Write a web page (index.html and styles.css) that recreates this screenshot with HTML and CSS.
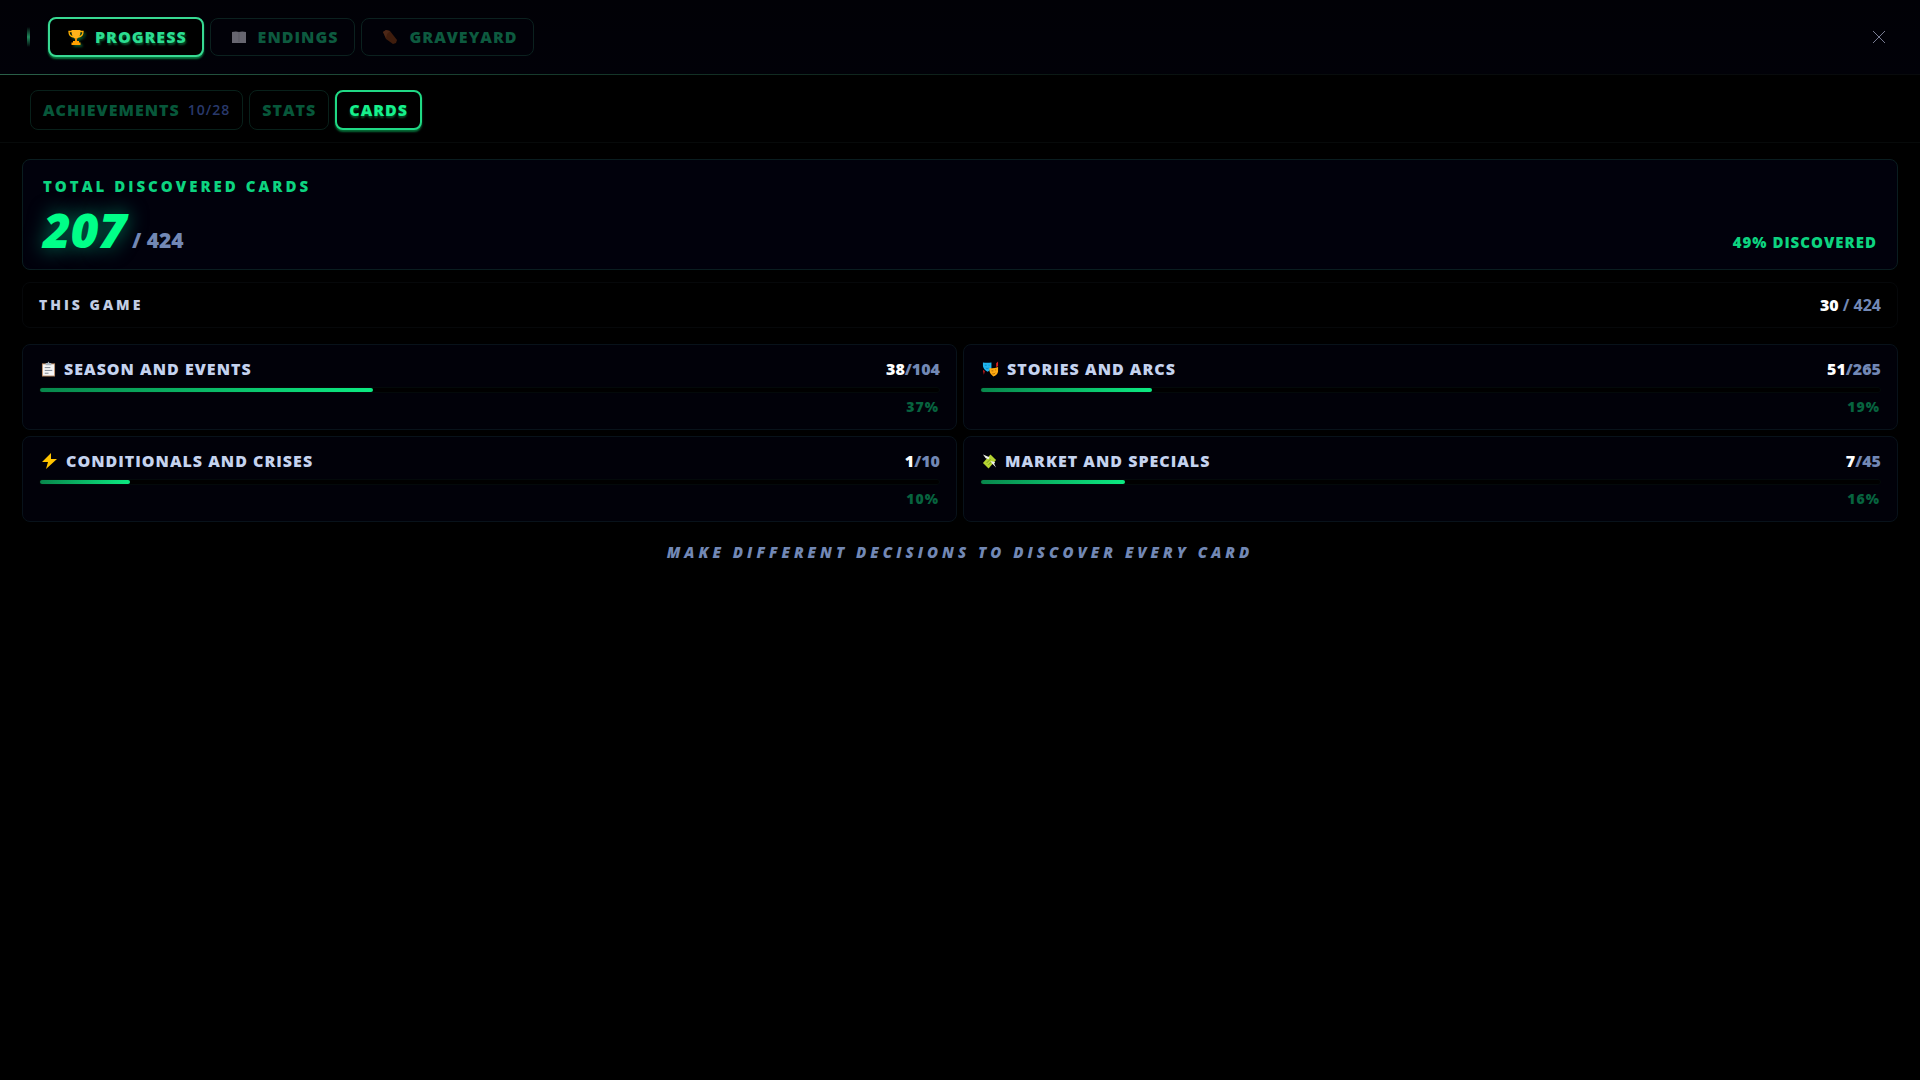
FILE: index.html
```html
<!DOCTYPE html>
<html lang="en">

<head>
    <meta charset="UTF-8">
    <meta name="viewport" content="width=device-width, initial-scale=1.0">
    <title>Progress</title>
    <link rel="stylesheet" href="styles.css">
</head>

<body>
    <header class="topbar">
        <span class="accent"></span>
        <nav class="tabs">
            <button type="button" class="tab active">
                <svg class="icon" viewBox="0 0 16 16">
                    <path d="M4 2.5H1c0 3.500 1.500 5 4.500 5.500M12 2.500h3c0 3.500-1.500 5-4.500 5.500" fill="none" stroke="#ffb000" stroke-width="1.300" />
                    <path d="M3.500 1h9c0 5-1 8-4.500 9C4.500 9 3.500 6 3.500 1z" fill="#ffb31a" />
                    <path d="M7 9h2v3.500H7z" fill="#f09000" />
                    <path d="M5 12h6v1.500h1.500V16h-9v-2.500H5z" fill="#ffa000" />
                </svg>
                Progress
            </button>
            <button type="button" class="tab">
                <svg class="icon" viewBox="0 0 16 16">
                    <path d="M1 3q4-1 7 0 3-1 7 0v11H1z" fill="#e4e2ee" />
                    <path d="M8 3v10" stroke="#c5c3d2" />
                </svg>
                Endings
            </button>
            <button type="button" class="tab">
                <svg class="icon" viewBox="0 0 16 16">
                    <path d="M1 3l3-2 4 1 7 9-1 3-3 1-7-5z" fill="#8a3f14" />
                    <path d="M1 3l3-2 4 1-3 3-1 4z" fill="#a8572a" />
                </svg>
                Graveyard
            </button>
        </nav>
        <button type="button" class="close" aria-label="Close">
            <svg viewBox="0 0 14 14">
                <path d="M1 1l12 12M13 1L1 13" />
            </svg>
        </button>
    </header>

    <nav class="subtabs">
        <button type="button" class="subtab">Achievements <span class="badge">10/28</span></button>
        <button type="button" class="subtab">Stats</button>
        <button type="button" class="subtab active">Cards</button>
    </nav>

    <main>
        <section class="total">
            <h2>Total discovered cards</h2>
            <div class="total-row">
                <p class="total-count"><strong>207</strong> <span>/ 424</span></p>
                <p class="total-percent">49% discovered</p>
            </div>
        </section>

        <section class="this-game">
            <h2>This game</h2>
            <p><strong>30</strong> / 424</p>
        </section>

        <section class="categories">
            <article class="category">
                <div class="category-head">
                    <svg class="icon" viewBox="0 0 16 16">
                        <path d="M1 2h14v14H1z" fill="#b98a62" />
                        <path d="M2 3h12v12H2z" fill="#f5f5f5" />
                        <path d="M5 1.500h2L8 0l1 1.500h2V4H5z" fill="#a9b4bd" />
                        <path d="M4 6.500h6M4 9.500h8M4 12.500h4" stroke="#76808c" />
                    </svg>
                    <h3>Season and events</h3>
                    <p class="count"><strong>38</strong>/104</p>
                </div>
                <div class="bar"><div class="fill" style="width: 37%"></div></div>
                <p class="percent">37%</p>
            </article>
            <article class="category">
                <div class="category-head">
                    <svg class="icon masks" viewBox="0 0 18 16">
                        <path d="M1 9l2 1-1 4zM15 2l2-2v5l-2 1z" fill="#d82020" />
                        <path d="M1 1q4 1 9 0v6q-1 3-4 4-4-2-5-6z" fill="#20b5ee" />
                        <path d="M3 4h2M7 4h1M4 7q1 1 3 0" fill="none" stroke="#0a86c0" />
                        <path d="M8 7q4 1 9-1v5q-1 4-5 5-3-2-4-5z" fill="#ffaa12" />
                        <path d="M10 10h2M14 9h1M11 13q2 1 3-1" fill="none" stroke="#b06a00" />
                    </svg>
                    <h3>Stories and arcs</h3>
                    <p class="count"><strong>51</strong>/265</p>
                </div>
                <div class="bar"><div class="fill" style="width: 19%"></div></div>
                <p class="percent">19%</p>
            </article>
            <article class="category">
                <div class="category-head">
                    <svg class="icon bolt" viewBox="0 0 17 16">
                        <path d="M10 0L1 9h6l-2 7 11-10h-6z" fill="#ffc400" />
                    </svg>
                    <h3>Conditionals and crises</h3>
                    <p class="count"><strong>1</strong>/10</p>
                </div>
                <div class="bar"><div class="fill" style="width: 10%"></div></div>
                <p class="percent">10%</p>
            </article>
            <article class="category">
                <div class="category-head">
                    <svg class="icon" viewBox="0 0 16 16">
                        <path d="M1 10l8-9 6 6-8 9z" fill="#b5d332" />
                        <path d="M5 10l4-4M7 12l4-4" stroke="#6f9420" />
                        <path d="M1 1l7 3-1 2-3-1zM9 8l5 1-1 2 2 4-4-4z" fill="#f2f4ec" />
                    </svg>
                    <h3>Market and specials</h3>
                    <p class="count"><strong>7</strong>/45</p>
                </div>
                <div class="bar"><div class="fill" style="width: 16%"></div></div>
                <p class="percent">16%</p>
            </article>
        </section>

        <p class="hint">Make different decisions to discover every card</p>
    </main>
</body>

</html>
```
FILE: styles.css
```css
* {
    box-sizing: border-box;
}

body {
    margin: 0;
    background-color: #000;
    color: #7288b5;
    font-family: "Open Sans", "Noto Sans", sans-serif;
    font-size: 16px;
    line-height: 20px;
    text-transform: uppercase;
}

h2,
h3,
p {
    margin: 0;
}

button {
    font: inherit;
    text-transform: inherit;
    cursor: pointer;
}

.topbar {
    display: flex;
    align-items: center;
    height: 75px;
    padding: 0 30px 0 27px;
    background: linear-gradient(#010106, #010108);
    border-bottom: 1px solid;
    border-image: linear-gradient(90deg, #2a6048, #15382a 30%, #080d0d 65%, #080a0c) 1;
}

.accent {
    width: 3px;
    height: 20px;
    margin-right: 18px;
    background: linear-gradient(transparent, #208a5c, transparent);
}

.tabs {
    display: flex;
    align-items: center;
    gap: 6px;
    flex: 1;
}

.tab,
.subtab {
    display: flex;
    align-items: center;
    background-color: #010108;
    border: 1px solid #0b211f;
    border-radius: 8px;
    color: #0d5a3f;
    font-weight: 800;
    letter-spacing: 1px;
}

.tab {
    height: 38px;
    gap: 11px;
    padding: 0 16px 0 20px;
}

.tab .icon {
    opacity: 0.45;
}

.tab.active {
    height: 40px;
    padding: 0 15px 0 18px;
    background-color: #000;
    border: 2px solid #38d993;
    color: #2bdc90;
    box-shadow: 0 2px 2px #087a40;
    text-shadow: 1px 2px 2px #05502a;
}

.tab.active .icon {
    opacity: 1;
    filter: drop-shadow(2px 2px 1px #064d2a);
}

.icon {
    width: 16px;
    height: 16px;
    flex: none;
}

.close {
    display: flex;
    padding: 4px;
    background: none;
    border: none;
}

.close svg {
    width: 14px;
    height: 14px;
    fill: none;
    stroke: #777b91;
}

.subtabs {
    display: flex;
    gap: 6px;
    padding: 15px 30px 12px;
    border-bottom: 1px solid #070a0a;
}

.subtab {
    height: 40px;
    padding: 0 12px;
    background-color: #000;
    border-color: #08201a;
    color: #07573a;
}

.subtab.active {
    border: 2px solid #20d985;
    color: #16f08c;
    box-shadow: 0 2px 2px #066a36;
    text-shadow: 0 2px 2px #05502a;
}

.badge {
    margin-left: 8px;
    color: #29396b;
    font-size: 14px;
    font-weight: 600;
}

main {
    padding: 16px 22px;
}

.total {
    padding: 16px 20px 9px;
    background-color: #01010c;
    border: 1px solid #0a1d20;
    border-radius: 8px;
}

.total h2 {
    margin-bottom: 4px;
    color: #0dd480;
    font-size: 15px;
    font-weight: 800;
    letter-spacing: 3px;
}

.total-row {
    display: flex;
    justify-content: space-between;
    align-items: baseline;
}

.total-count {
    font-size: 21px;
    font-weight: 800;
}

.total-count strong {
    color: #00ff88;
    font-size: 48px;
    font-style: italic;
    font-weight: 800;
    line-height: 60px;
    text-shadow: 0 0 20px #007f60;
}

.total-percent {
    color: #0dd480;
    font-size: 15px;
    font-weight: 800;
    letter-spacing: 1px;
}

.this-game {
    display: flex;
    justify-content: space-between;
    align-items: center;
    margin: 12px 0 16px;
    padding: 12px 16px;
    border: 1px solid #06080a;
    border-radius: 8px;
    font-weight: 700;
}

.this-game h2 {
    color: #c2cde4;
    font-size: 14px;
    font-weight: 800;
    letter-spacing: 3px;
}

.this-game strong,
.count strong {
    color: #fff;
    font-weight: 800;
}

.categories {
    display: grid;
    grid-template-columns: 1fr 1fr;
    gap: 6px;
}

.category {
    padding: 14px 16px 12px;
    background-color: #010109;
    border: 1px solid #08121a;
    border-radius: 8px;
}

.category-head {
    display: flex;
    align-items: center;
    gap: 8px;
    padding-left: 2px;
}

.category h3 {
    flex: 1;
    color: #c5d3ef;
    font-size: 16px;
    font-weight: 800;
    letter-spacing: 1px;
}

.category .icon {
    width: 15px;
}

.category .masks,
.category .bolt {
    width: 17px;
}

.count {
    font-weight: 800;
}

.bar {
    height: 6px;
    margin: 8px 0 4px;
    background-color: #000;
    border: 1px solid #03090a;
    border-radius: 3px;
}

.fill {
    height: 4px;
    background: linear-gradient(90deg, #08874c, #0cea82);
    border-radius: 2px;
}

.percent {
    padding-right: 1px;
    color: #07633f;
    font-size: 14px;
    font-weight: 800;
    letter-spacing: 1px;
    text-align: right;
}

.hint {
    margin-top: 20px;
    font-size: 15px;
    font-style: italic;
    font-weight: 800;
    letter-spacing: 4px;
    text-align: center;
}
```
